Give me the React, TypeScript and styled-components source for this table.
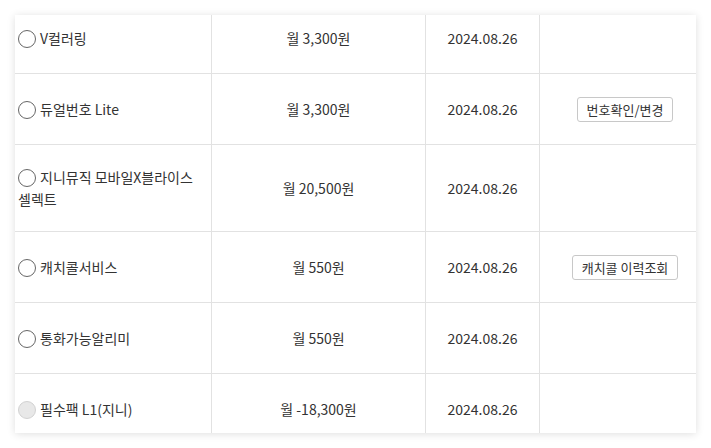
import React from "react";
import styled, { createGlobalStyle } from "styled-components";

const Global = createGlobalStyle`
  html, body { margin: 0; padding: 0; background: #fff; }
  body { font-family: "Noto Sans CJK KR", "Noto Sans", sans-serif; color: #333; }
`;

const Page = styled.div`
  padding: 15px;
`;

const Card = styled.div`
  width: 681px;
  height: 418px;
  overflow: hidden;
  background: #fff;
  box-shadow: 0 1px 8px rgba(0, 0, 0, 0.13);
`;

const Table = styled.div`
  margin-top: -12px;
  display: grid;
  grid-template-columns: 197px 214px 114px 156px;
`;

const Cell = styled.div<{ $col: number }>`
  box-sizing: border-box;
  min-height: 71px;
  padding: ${(p) => (p.$col === 0 ? "21px 14px 21px 3px" : p.$col === 3 ? "0 0 0 14px" : "0")};
  border-bottom: 1px solid #e2e2e2;
  border-right: ${(p) => (p.$col < 3 ? "1px solid #e2e2e2" : "none")};
  display: flex;
  align-items: center;
  justify-content: ${(p) => (p.$col === 0 ? "flex-start" : "center")};
  font-size: 14px;
  line-height: 22px;
  color: #333;
`;

const NameText = styled.div`
  display: block;
`;

const Radio = styled.span<{ $disabled?: boolean }>`
  display: inline-block;
  box-sizing: border-box;
  width: 18px;
  height: 18px;
  border-radius: 50%;
  border: 1px solid ${(p) => (p.$disabled ? "#d2d2d2" : "#666")};
  background: ${(p) => (p.$disabled ? "#e8e8e8" : "#fff")};
  vertical-align: -4px;
  margin-right: 4px;
`;

const Button = styled.button`
  font-family: "Noto Sans CJK KR", "Noto Sans", sans-serif;
  font-size: 13px;
  color: #333;
  background: #fff;
  border: 1px solid #c8c8c8;
  border-radius: 3px;
  height: 25px;
  padding: 0 9px;
  line-height: 23px;
  cursor: pointer;
`;

type Row = { name: string; price: string; date: string; button?: string; disabled?: boolean };

const rows: Row[] = [
  { name: "V컬러링", price: "월 3,300원", date: "2024.08.26" },
  { name: "듀얼번호 Lite", price: "월 3,300원", date: "2024.08.26", button: "번호확인/변경" },
  { name: "지니뮤직 모바일X블라이스 셀렉트", price: "월 20,500원", date: "2024.08.26" },
  { name: "캐치콜서비스", price: "월 550원", date: "2024.08.26", button: "캐치콜 이력조회" },
  { name: "통화가능알리미", price: "월 550원", date: "2024.08.26" },
  { name: "필수팩 L1(지니)", price: "월 -18,300원", date: "2024.08.26", disabled: true },
];

export default function App() {
  return (
    <>
      <Global />
      <Page>
        <Card>
          <Table>
            {rows.map((r, i) => (
              <React.Fragment key={i}>
                <Cell $col={0}>
                  <NameText>
                    <Radio $disabled={r.disabled} />
                    {r.name}
                  </NameText>
                </Cell>
                <Cell $col={1}>{r.price}</Cell>
                <Cell $col={2}>{r.date}</Cell>
                <Cell $col={3}>{r.button ? <Button>{r.button}</Button> : null}</Cell>
              </React.Fragment>
            ))}
          </Table>
        </Card>
      </Page>
    </>
  );
}
